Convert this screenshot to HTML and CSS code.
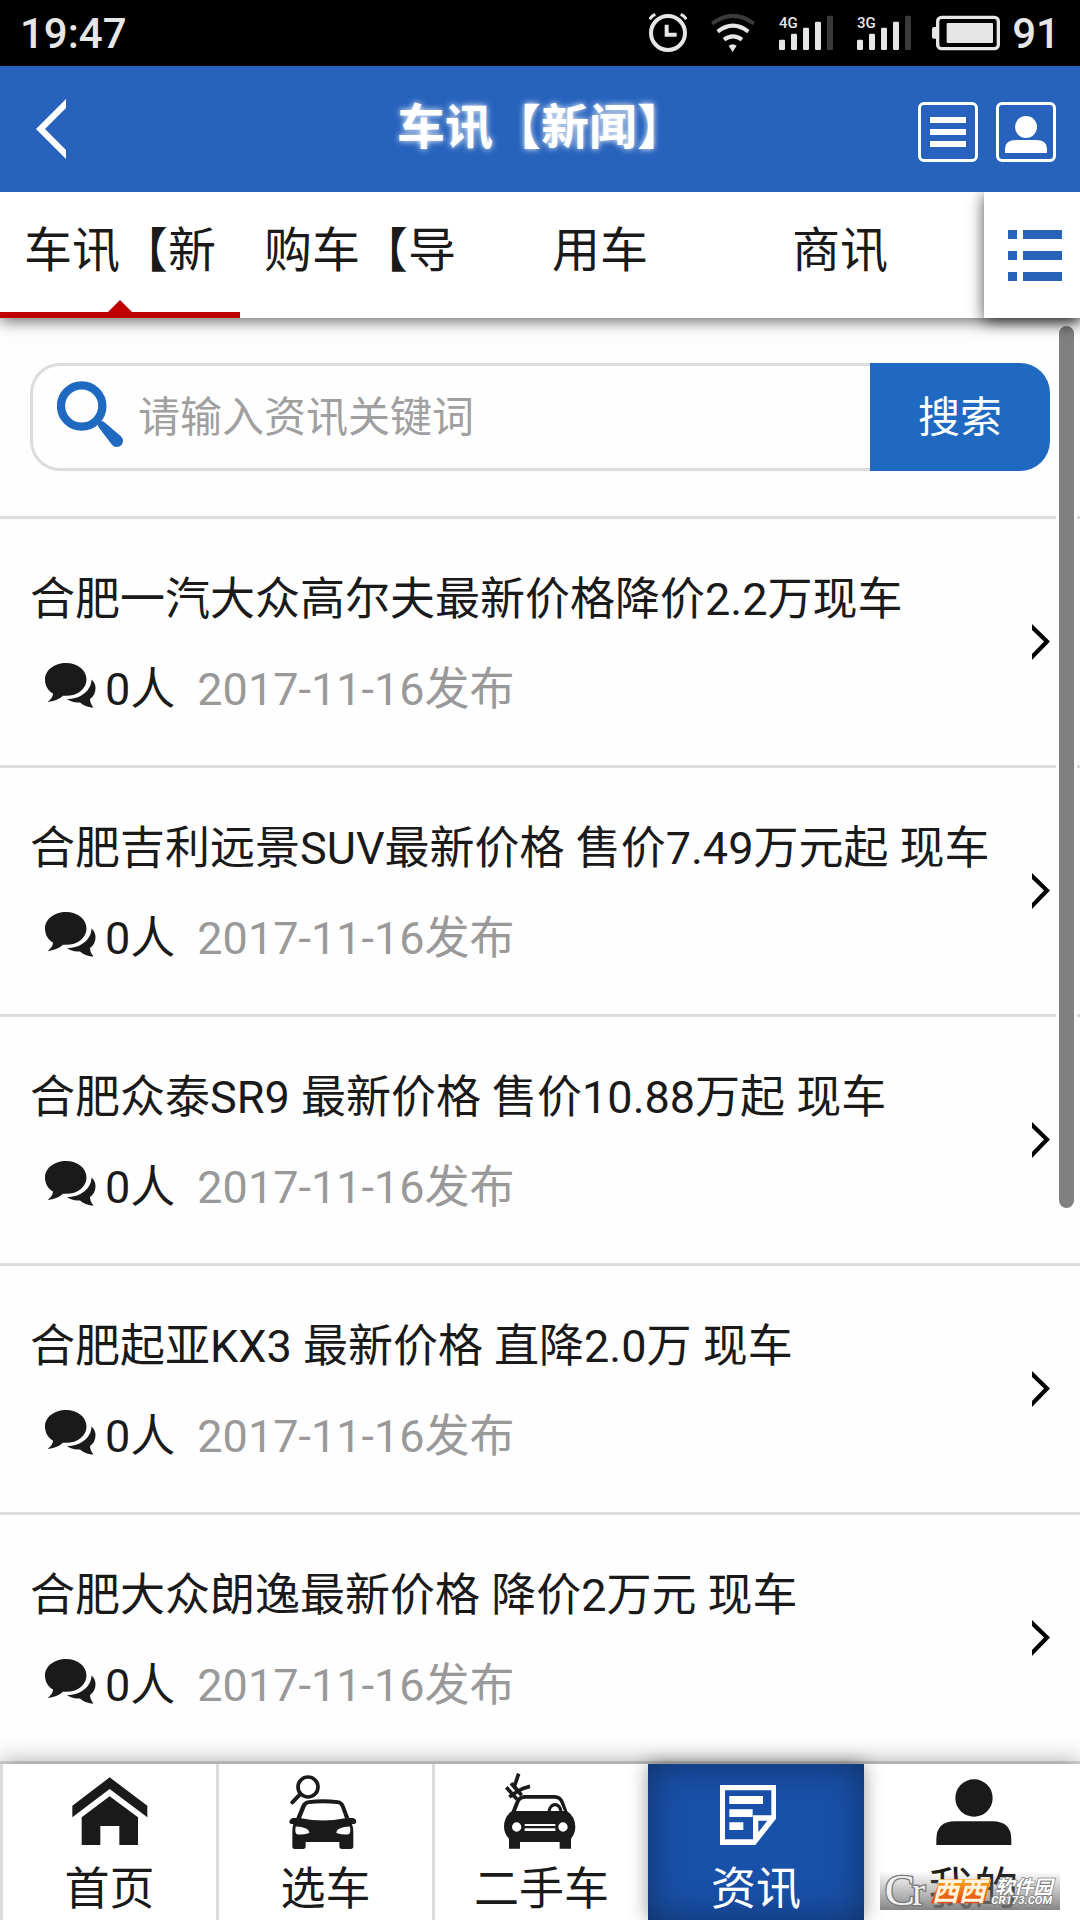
FILE: index.html
```html
<!DOCTYPE html>
<html lang="zh-CN">
<head>
    <meta charset="UTF-8">
    <meta name="viewport" content="width=device-width, initial-scale=1.0">
    <title>车讯【新闻】</title>
    <link rel="stylesheet" href="styles.css">
</head>
<body>

<!-- Shared icons -->
<svg class="sprite" aria-hidden="true">
    <symbol id="icon-comments" viewBox="0 0 51 48" preserveAspectRatio="none">
        <path d="M21 0C32.500 0 41.500 7.500 41.500 17.500S32.500 35 21 35c-1 0-2 0-3-.2C14 38.500 9 41 2.500 41.500 6 39 8 36 8 32.500 3 29.500 0 24 0 17.500 0 7.500 9.500 0 21 0z"/>
        <path d="M46.500 17.500c3 3 4 6 4 9.500 0 5-2 9-5.500 11.500 0 3 1 6 3.500 9-6.500-.5-10-2.500-13.500-5.500-5 .5-9.500-.5-13-3.500 13 0 24.500-9 24.500-21z"/>
    </symbol>
    <symbol id="icon-arrow" viewBox="0 0 18 36">
        <path d="M0 0l18 17.500L0 36v-6l12-12.500L0 6z"/>
    </symbol>
</svg>

<!-- Phone status bar -->
<div class="status">
    <span class="status-time">19:47</span>
    <div class="status-icons">
        <svg width="38" height="42" viewBox="87 36 114 126">
            <g fill="none" stroke="#e6e6e6">
                <circle cx="144" cy="99" r="51" stroke-width="12"/>
                <path d="M140 74v30h30" stroke-width="12"/>
                <path d="M89 58q6-11 17-15M199 58q-6-11-17-15" stroke-width="9"/>
            </g>
        </svg>
        <svg width="44" height="42" viewBox="274 36 132 126">
            <g fill="none" stroke-width="12">
                <path d="M277 71q63-47 126 0" stroke="#3a3a3a"/>
                <path d="M294 95q46-36 92 0" stroke="#e6e6e6"/>
                <path d="M313 119q27-20 54 0" stroke="#e6e6e6"/>
            </g>
            <path d="M327 137q12-9 24 0l-12 19z" fill="#e6e6e6"/>
        </svg>
        <svg width="54" height="42" viewBox="477 36 162 126">
            <text class="signal-text" x="477" y="83">4G</text>
            <g fill="#e6e6e6">
                <rect x="477" y="119" width="18" height="31" rx="4"/>
                <rect x="513" y="101" width="18" height="49" rx="4"/>
                <rect x="549" y="83" width="18" height="67" rx="4"/>
                <rect x="585" y="65" width="18" height="85" rx="4"/>
            </g>
            <rect x="621" y="47" width="18" height="103" rx="4" fill="#3a3a3a"/>
        </svg>
        <svg width="54" height="42" viewBox="477 36 162 126">
            <text class="signal-text" x="477" y="83">3G</text>
            <g fill="#e6e6e6">
                <rect x="477" y="119" width="18" height="31" rx="4"/>
                <rect x="513" y="101" width="18" height="49" rx="4"/>
                <rect x="549" y="83" width="18" height="67" rx="4"/>
                <rect x="585" y="65" width="18" height="85" rx="4"/>
            </g>
            <rect x="621" y="47" width="18" height="103" rx="4" fill="#3a3a3a"/>
        </svg>
        <svg class="battery" width="68" height="42" viewBox="936 36 204 126">
            <rect x="953" y="52" width="182" height="94" rx="12" fill="none" stroke="#e6e6e6" stroke-width="10"/>
            <rect x="980" y="69" width="139" height="60" rx="3" fill="#e6e6e6"/>
            <path d="M950 81h-8q-6 0-6 6v23q0 6 6 6h8z" fill="#e6e6e6"/>
        </svg>
        <span>91</span>
    </div>
</div>

<header class="header">
    <a href="#" class="back" aria-label="返回">
        <svg width="30" height="60" viewBox="0 0 30 60"><path d="M30 0v9L9 30l21 21v9L0 30z" fill="#fff"/></svg>
    </a>
    <h1>车讯【新闻】</h1>
    <div class="header-buttons">
        <button type="button" aria-label="菜单">
            <svg width="54" height="54" viewBox="0 0 54 54"><path d="M9 12h36v6H9zM9 24h36v6H9zM9 36h36v6H9z" fill="#fff"/></svg>
        </button>
        <button type="button" aria-label="我的账户">
            <svg width="54" height="54" viewBox="0 0 54 54"><circle cx="27" cy="22" r="11" fill="#fff"/><path d="M6 48v-4q0-9 11-9h20q11 0 11 9v4z" fill="#fff"/></svg>
        </button>
    </div>
</header>

<!-- Channel tabs -->
<nav class="tabs">
    <div class="tab-list">
        <a href="#" class="tab active">车讯【新</a>
        <a href="#" class="tab">购车【导</a>
        <a href="#" class="tab">用车</a>
        <a href="#" class="tab">商讯</a>
    </div>
    <button type="button" class="tab-more" aria-label="全部栏目">
        <svg width="54" height="51" viewBox="0 0 54 51"><path d="M0 0h9v9H0zM15 0h39v9H15zM0 21h9v9H0zM15 21h39v9H15zM0 42h9v9H0zM15 42h39v9H15z" fill="#2763b9"/></svg>
    </button>
</nav>

<main class="content">
    <form class="search">
        <label class="search-box">
            <svg width="66" height="66" viewBox="171 126 198 198">
                <circle cx="245" cy="201" r="62" fill="none" stroke="#2069c0" stroke-width="25"/>
                <path d="M304 246q6 0 12 6l46 39q10 9 6 20-5 13-19 13-8 0-13-7l-38-49q-6-8-4-14z" fill="#2069c0"/>
            </svg>
            <input type="search" placeholder="请输入资讯关键词" aria-label="请输入资讯关键词">
        </label>
        <button type="submit">搜索</button>
    </form>

    <ul class="news">
        <li><a href="#">
            <div class="news-text">
                <h2>合肥一汽大众高尔夫最新价格降价2.2万现车</h2>
                <p><svg class="comments"><use href="#icon-comments"/></svg>0人<time datetime="2017-11-16">2017-11-16发布</time></p>
            </div>
            <svg class="arrow"><use href="#icon-arrow"/></svg>
        </a></li>
        <li><a href="#">
            <div class="news-text">
                <h2>合肥吉利远景SUV最新价格 售价7.49万元起 现车</h2>
                <p><svg class="comments"><use href="#icon-comments"/></svg>0人<time datetime="2017-11-16">2017-11-16发布</time></p>
            </div>
            <svg class="arrow"><use href="#icon-arrow"/></svg>
        </a></li>
        <li><a href="#">
            <div class="news-text">
                <h2>合肥众泰SR9 最新价格 售价10.88万起 现车</h2>
                <p><svg class="comments"><use href="#icon-comments"/></svg>0人<time datetime="2017-11-16">2017-11-16发布</time></p>
            </div>
            <svg class="arrow"><use href="#icon-arrow"/></svg>
        </a></li>
        <li><a href="#">
            <div class="news-text">
                <h2>合肥起亚KX3 最新价格 直降2.0万 现车</h2>
                <p><svg class="comments"><use href="#icon-comments"/></svg>0人<time datetime="2017-11-16">2017-11-16发布</time></p>
            </div>
            <svg class="arrow"><use href="#icon-arrow"/></svg>
        </a></li>
        <li><a href="#">
            <div class="news-text">
                <h2>合肥大众朗逸最新价格 降价2万元 现车</h2>
                <p><svg class="comments"><use href="#icon-comments"/></svg>0人<time datetime="2017-11-16">2017-11-16发布</time></p>
            </div>
            <svg class="arrow"><use href="#icon-arrow"/></svg>
        </a></li>
    </ul>

    <div class="scrollbar"></div>
</main>

<!-- Bottom navigation -->
<nav class="bottom-nav">
    <a href="#">
        <svg viewBox="212 93 234 234">
            <path d="M328 112l113 85v35l-113-85-112 85v-35z"/>
            <path d="M328 169l85 63v83h-56v-57h-57v57h-56v-83z"/>
        </svg>
        首页
    </a>
    <a href="#">
        <svg viewBox="860 93 234 234">
            <circle cx="923" cy="141" r="30" fill="none" stroke="#1a1a1a" stroke-width="11"/>
            <path d="M899 163l-23 24" stroke="#1a1a1a" stroke-width="12" stroke-linecap="round"/>
            <path fill-rule="evenodd" d="M888 234l15-37q6-14 22-16 42-6 88 0 14 2 20 16l14 37h12q8 2 9 10 0 7-5 8h-8q4 10 4 24v43q0 8-8 8h-26q-8 0-8-8v-13H916v13q0 8-8 8h-25q-7 0-7-8v-43q0-14 3-24h-7q-6-1-5-8 2-8 10-10zM902 235q66 13 132 0l-13-36q-3-7-11-7-43-5-84 0-7 1-10 8zM886 260q-3 20 4 23 18 2 37-4-1-10-12-14-14-6-29-5zM1049 260q3 20-4 23-18 2-37-4 1-10 12-14 14-6 29-5z"/>
        </svg>
        选车
    </a>
    <a href="#">
        <svg viewBox="219 93 234 234">
            <g fill="none" stroke="#1a1a1a" stroke-width="11">
                <path d="M266 101l-13 38M300 139q-20 4-36 14l-26 18M253 139l11 14M229 142l32 36M243 130l32 36"/>
            </g>
            <path fill-rule="evenodd" d="M245 214l11-28q8-21 28-21h90q20 0 28 21l10 28q23 16 24 46 0 20-13 36v30h-34v-20H270v20h-33v-30q-15-16-15-36 0-30 23-46zM258 213h95q4-23 22-24 19 1 22 24h5l-12-28q-5-9-16-9h-88q-12 0-17 9zM362 213h26q-3-13-13-14-10 1-13 14zM246 261a14 14 0 1 0 28 0 14 14 0 1 0-28 0zM385 261a14 14 0 1 0 28 0 14 14 0 1 0-28 0zM284 252h92v6h-92zM284 265h92v8h-92z"/>
        </svg>
        二手车
    </a>
    <a href="#" class="current">
        <svg viewBox="861 93 234 234">
            <path fill-rule="evenodd" d="M870 135h168v101l-62 79H870zM885 151v147h84v-72h55v-75zM985 242v35l27-35z"/>
            <path d="M898 168h101v24H898zM898 208h70v23h-70zM898 247h42v23h-42z"/>
        </svg>
        资讯
    </a>
    <a href="#">
        <svg viewBox="284 93 234 234">
            <circle cx="401" cy="174" r="56"/>
            <path d="M288 315v-16q0-55 56-55h112q57 0 57 55v16z"/>
        </svg>
        我的
    </a>
</nav>

<!-- Site stamp over the last tab -->
<div class="stamp">
    <svg viewBox="0 0 540 117">
        <defs>
            <linearGradient id="orange" x1="0" y1="0" x2="0" y2="1">
                <stop offset="0" stop-color="#f8a51b"/>
                <stop offset="1" stop-color="#e4470f"/>
            </linearGradient>
        </defs>
        <g class="stamp-logo">
            <text x="14" y="102" font-size="136">C</text>
            <text x="96" y="102" font-size="120">r</text>
        </g>
        <path d="M180 25h84l-22 72h-90zM264 25h70l-22 72h-78z" fill="url(#orange)"/>
        <text class="stamp-name" x="156" y="89" font-size="80">西西</text>
        <text class="stamp-sub" x="344" y="68" font-size="58">软件园</text>
        <text class="stamp-url" x="334" y="98" font-size="34">CR173.COM</text>
    </svg>
</div>

</body>
</html>
```

FILE: styles.css
```css
* {
    box-sizing: border-box;
}

body {
    position: relative;
    display: flex;
    flex-direction: column;
    height: 100vh;
    margin: 0;
    overflow: hidden;
    background: #fefefe;
    color: #1a1a1a;
    font-family: Roboto, "Noto Sans CJK SC", sans-serif;
    font-size: 45px;
}

h1, h2, p, ul {
    margin: 0;
    padding: 0;
}

a {
    color: inherit;
    text-decoration: none;
}

button {
    padding: 0;
    border: none;
    font-family: inherit;
    cursor: pointer;
}

svg {
    display: block;
    flex-shrink: 0;
}

.sprite {
    position: absolute;
    width: 0;
    height: 0;
}

/* Status bar */
.status {
    display: flex;
    justify-content: space-between;
    align-items: center;
    height: 66px;
    padding: 0 20px;
    background: #000;
    color: #e6e6e6;
    font-size: 42px;
    font-weight: 500;
}

.status-icons {
    display: flex;
    align-items: center;
    gap: 24px;
}

.status-icons span {
    margin-left: -12px;
}

.status-icons .battery {
    margin-left: -3px;
}

.signal-text {
    fill: #e6e6e6;
    font-size: 45px;
    font-weight: 500;
}

/* Header */
.header {
    display: flex;
    justify-content: space-between;
    align-items: center;
    height: 126px;
    padding: 0 24px 0 36px;
    background: #2763bd;
    color: #fff;
}

.header h1 {
    flex: 1;
    padding-left: 98px;
    padding-bottom: 3px;
    font-size: 48px;
    font-weight: 700;
    line-height: 72px;
    text-align: center;
    text-shadow: 0 0 6px #fff;
}

.header-buttons {
    display: flex;
    gap: 18px;
    padding-top: 6px;
}

.header-buttons button {
    width: 60px;
    height: 60px;
    border: 3px solid #fff;
    border-radius: 6px;
    background: none;
}

/* Channel tabs */
.tabs {
    position: relative;
    z-index: 1;
    display: flex;
    height: 126px;
    background: #fff;
    box-shadow: 0 3px 15px rgba(0, 0, 0, 0.6);
    clip-path: inset(0 0 -30px 0);
}

.tab-list {
    display: flex;
    flex: 1;
    padding-right: 24px;
}

.tab {
    position: relative;
    flex: 1;
    height: 126px;
    font-size: 48px;
    line-height: 117px;
    text-align: center;
    white-space: nowrap;
}

.tab.active {
    border-bottom: 6px solid #c00000;
}

/* Small pointer above the red line */
.tab.active::after {
    content: "";
    position: absolute;
    bottom: 0;
    left: 50%;
    margin-left: -12px;
    border: 12px solid transparent;
    border-top: none;
    border-bottom-color: #c00000;
}

.tab-more {
    display: flex;
    justify-content: center;
    align-items: center;
    width: 96px;
    padding-left: 6px;
    background: #fff;
    box-shadow: 0 3px 15px rgba(0, 0, 0, 0.7);
}

/* Search */
.content {
    position: relative;
    flex: 1;
    overflow: hidden;
}

.search {
    display: flex;
    padding: 45px 30px;
    border-bottom: 3px solid #dcdcdc;
}

.search-box {
    display: flex;
    flex: 1;
    gap: 15px;
    padding: 15px 0 15px 24px;
    border: 3px solid #dcdcdc;
    border-right: none;
    border-radius: 30px 0 0 30px;
}

.search-box input {
    flex: 1;
    min-width: 0;
    height: 72px;
    padding: 0;
    border: none;
    outline: none;
    background: none;
    font-family: inherit;
    font-size: 42px;
}

.search-box input::placeholder {
    color: #a0a0a0;
}

.search button {
    width: 180px;
    padding-bottom: 8px;
    border-radius: 0 30px 30px 0;
    background: #1f69c0;
    color: #fff;
    font-size: 42px;
}

/* News list */
.news {
    list-style: none;
}

.news a {
    display: flex;
    align-items: center;
    height: 249px;
    padding: 0 30px;
    border-bottom: 3px solid #dcdcdc;
}

.news-text {
    flex: 1;
    min-width: 0;
    padding-top: 6px;
}

.news h2 {
    font-size: 45px;
    font-weight: 400;
    line-height: 90px;
    white-space: nowrap;
}

.news p {
    display: flex;
    align-items: center;
    padding-left: 15px;
    line-height: 90px;
}

.news time {
    margin-left: 22px;
    color: #999;
}

.comments {
    width: 51px;
    height: 45px;
    margin: 0 9px 9px 0;
    fill: #1a1a1a;
}

.arrow {
    width: 18px;
    height: 36px;
    fill: #000;
}

.scrollbar {
    position: absolute;
    top: 8px;
    right: 6px;
    width: 15px;
    height: 61%;
    border-radius: 8px;
    background: #808080;
    box-shadow: 0 0 0 3px #fefefe;
}

/* Bottom navigation */
.bottom-nav {
    position: relative;
    z-index: 1;
    display: flex;
    height: 156px;
    background: #fff;
    box-shadow: 0 0 24px rgba(0, 0, 0, 0.4);
}

.bottom-nav a {
    display: flex;
    flex-direction: column;
    align-items: center;
    width: 20%;
    padding-top: 7px;
    border-left: 3px solid #dcdcdc;
    line-height: 82px;
}

.bottom-nav a:last-child {
    border-color: transparent;
}

.bottom-nav svg {
    width: 78px;
    height: 78px;
    fill: #1a1a1a;
}

.bottom-nav .current {
    border: none;
    background: #1950a8;
    box-shadow: 0 0 18px rgba(0, 0, 0, 0.4), inset 0 0 36px rgba(0, 0, 0, 0.4);
    color: #fff;
}

.bottom-nav .current svg {
    fill: #fff;
}

/* Site stamp */
.stamp {
    position: absolute;
    right: 20px;
    bottom: 10px;
    z-index: 2;
    width: 180px;
    height: 39px;
    background: linear-gradient(rgba(120, 120, 120, 0), rgba(120, 120, 120, 0.9));
}

.stamp svg {
    overflow: visible;
}

.stamp-logo {
    fill: #f0f0f0;
    stroke: #777;
    stroke-width: 8px;
    font-family: "Liberation Serif", serif;
    paint-order: stroke;
}

.stamp-name, .stamp-sub, .stamp-url {
    fill: #fff;
    font-style: italic;
    font-weight: 700;
}

.stamp-name {
    fill: #fff3dc;
}

.stamp-sub, .stamp-url {
    stroke: #777;
    stroke-width: 4px;
    paint-order: stroke;
}
```
